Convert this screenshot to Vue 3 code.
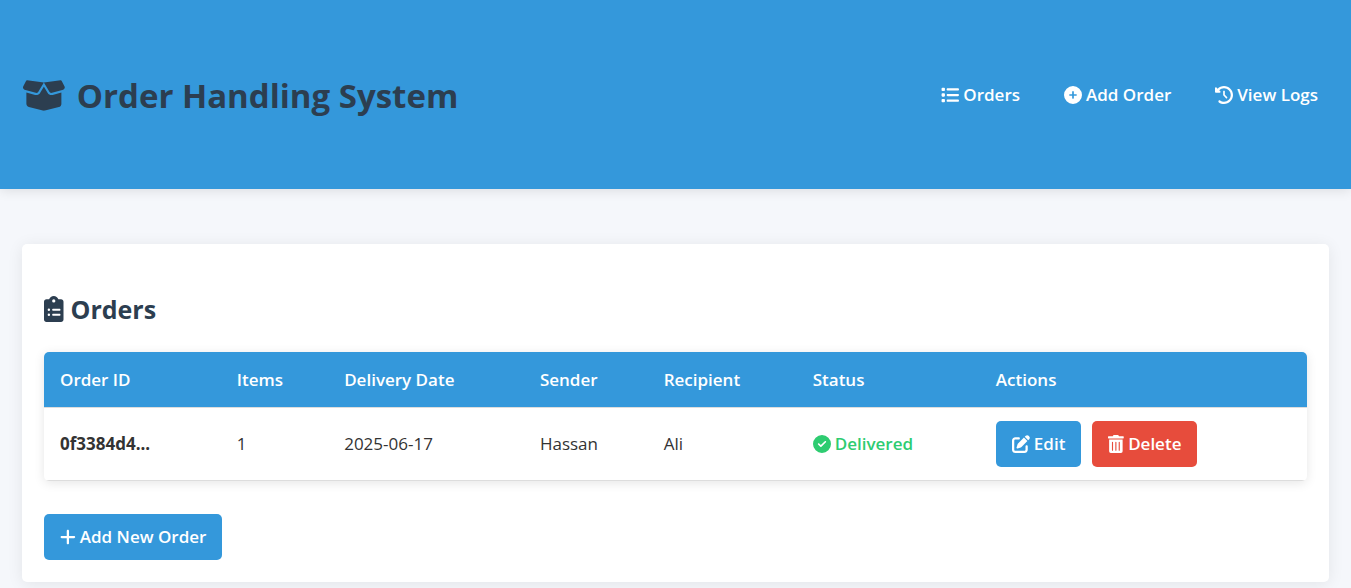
<script setup>
const icons = {
  box: { w: 640, d: 'M58.9 42.1c3-6.1 9.6-9.6 16.3-8.7L320 64 564.8 33.4c6.7-.8 13.3 2.7 16.3 8.7l41.7 83.4c9 17.9-.6 39.6-19.8 45.1L439.6 217.3c-13.9 4-28.8-1.9-36.2-14.3L320 64 236.6 203c-7.4 12.4-22.3 18.3-36.2 14.3L37.1 170.6c-19.3-5.5-28.8-27.2-19.8-45.1L58.9 42.1zM321.1 128l54.9 91.4c14.9 24.8 44.6 36.6 72.5 28.6L576 211.6v167c0 22-15 41.2-36.4 46.6l-204.1 51c-10.2 2.6-20.9 2.6-31 0l-204.1-51C79 419.7 64 400.5 64 378.5v-167L191.6 248c27.8 8 57.6-3.8 72.5-28.6L318.9 128h2.2z' },
  list: { w: 512, d: 'M40 48C26.7 48 16 58.7 16 72v48c0 13.3 10.7 24 24 24H88c13.3 0 24-10.7 24-24V72c0-13.3-10.7-24-24-24H40zM192 64c-17.7 0-32 14.3-32 32s14.3 32 32 32H480c17.7 0 32-14.3 32-32s-14.3-32-32-32H192zm0 160c-17.7 0-32 14.3-32 32s14.3 32 32 32H480c17.7 0 32-14.3 32-32s-14.3-32-32-32H192zm0 160c-17.7 0-32 14.3-32 32s14.3 32 32 32H480c17.7 0 32-14.3 32-32s-14.3-32-32-32H192zM16 232v48c0 13.3 10.7 24 24 24H88c13.3 0 24-10.7 24-24V232c0-13.3-10.7-24-24-24H40c-13.3 0-24 10.7-24 24zM40 368c-13.3 0-24 10.7-24 24v48c0 13.3 10.7 24 24 24H88c13.3 0 24-10.7 24-24V392c0-13.3-10.7-24-24-24H40z' },
  circlePlus: { w: 512, d: 'M256 512A256 256 0 1 0 256 0a256 256 0 1 0 0 512zM232 344V280H168c-13.3 0-24-10.7-24-24s10.7-24 24-24h64V168c0-13.3 10.7-24 24-24s24 10.7 24 24v64h64c13.3 0 24 10.7 24 24s-10.7 24-24 24H280v64c0 13.3-10.7 24-24 24s-24-10.7-24-24z' },
  history: { w: 512, d: 'M75 75L41 41C25.9 25.9 0 36.6 0 57.9V168c0 13.3 10.7 24 24 24H134.1c21.4 0 32.1-25.9 17-41l-30.8-30.8C155 85.5 203 64 256 64c106 0 192 86 192 192s-86 192-192 192c-40.8 0-78.6-12.7-109.7-34.4c-14.5-10.1-34.4-6.6-44.6 7.9s-6.6 34.4 7.9 44.6C151.2 495 201.7 512 256 512c141.4 0 256-114.6 256-256S397.4 0 256 0C185.3 0 121.3 28.7 75 75zm181 53c-13.3 0-24 10.7-24 24V256c0 6.4 2.5 12.5 7 17l72 72c9.4 9.4 24.6 9.4 33.9 0s9.4-24.6 0-33.9l-65-65V152c0-13.3-10.7-24-24-24z' },
  clipboard: { w: 384, d: 'M192 0c-41.8 0-77.4 26.7-90.5 64H48C21.5 64 0 85.5 0 112V464c0 26.5 21.5 48 48 48H336c26.5 0 48-21.5 48-48V112c0-26.5-21.5-48-48-48H282.5C269.4 26.7 233.8 0 192 0zm0 64a32 32 0 1 1 0 64 32 32 0 1 1 0-64zM72 272a24 24 0 1 1 48 0 24 24 0 1 1 -48 0zm104-20H312c8.8 0 12 8 12 20s-3.2 20-12 20H176c-8.8 0-16-8-16-20s7.200-20 16-20zM72 368a24 24 0 1 1 48 0 24 24 0 1 1 -48 0zm88 0c0-12 7.2-20 16-20H312c8.800 0 12 8 12 20s-3.200 20-12 20H176c-8.800 0-16-8-16-20z' },
  check: { w: 512, d: 'M256 512A256 256 0 1 0 256 0a256 256 0 1 0 0 512zM369 209L241 337c-9.4 9.4-24.6 9.4-33.9 0l-64-64c-9.4-9.4-9.4-24.6 0-33.9s24.6-9.4 33.9 0l47 47L335 175c9.4-9.4 24.6-9.4 33.9 0s9.4 24.6 0 33.9z' },
  edit: { w: 512, d: 'M471.6 21.7c-21.9-21.9-57.3-21.9-79.2 0L362.3 51.7l97.9 97.9 30.1-30.1c21.9-21.9 21.9-57.3 0-79.2L471.6 21.7zm-299.2 220c-6.1 6.1-10.8 13.6-13.5 21.9l-29.6 88.8c-2.9 8.6-.6 18.1 5.8 24.6s15.9 8.7 24.6 5.8l88.8-29.6c8.2-2.7 15.7-7.4 21.9-13.5L437.7 172.3 339.7 74.3 172.4 241.7zM96 64C43 64 0 107 0 160V416c0 53 43 96 96 96H352c53 0 96-43 96-96V320c0-17.7-14.3-32-32-32s-32 14.3-32 32v96c0 17.7-14.3 32-32 32H96c-17.7 0-32-14.3-32-32V160c0-17.7 14.3-32 32-32h96c17.7 0 32-14.3 32-32s-14.3-32-32-32H96z' },
  trash: { w: 448, d: 'M32 464a48 48 0 0 0 48 48h288a48 48 0 0 0 48-48V128H32zm272-256a16 16 0 0 1 32 0v224a16 16 0 0 1-32 0zm-96 0a16 16 0 0 1 32 0v224a16 16 0 0 1-32 0zm-96 0a16 16 0 0 1 32 0v224a16 16 0 0 1-32 0zM432 32H312l-9.4-18.7A24 24 0 0 0 281.1 0H166.8a23.7 23.7 0 0 0-21.4 13.3L136 32H16A16 16 0 0 0 0 48v32a16 16 0 0 0 16 16h416a16 16 0 0 0 16-16V48a16 16 0 0 0-16-16z' },
  plus: { w: 448, d: 'M256 80c0-17.7-14.3-32-32-32s-32 14.3-32 32V224H48c-17.7 0-32 14.3-32 32s14.3 32 32 32H192V432c0 17.7 14.3 32 32 32s32-14.3 32-32V288H400c17.7 0 32-14.3 32-32s-14.3-32-32-32H256V80z' },
}

const Icon = (props) =>
  h('svg', { class: 'icon', viewBox: `0 0 ${icons[props.name].w} 512`, 'aria-hidden': 'true' }, [
    h('path', { d: icons[props.name].d }),
  ])
Icon.props = ['name']

const links = [
  { icon: 'list', label: 'Orders' },
  { icon: 'circlePlus', label: 'Add Order' },
  { icon: 'history', label: 'View Logs' },
]
const columns = ['Order ID', 'Items', 'Delivery Date', 'Sender', 'Recipient', 'Status', 'Actions']
const orders = [
  { id: '0f3384d4...', items: 1, date: '2025-06-17', sender: 'Hassan', recipient: 'Ali', status: 'Delivered' },
]
</script>

<script>
import { h } from 'vue'
</script>

<template>
  <header class="header">
    <h1 class="brand"><Icon name="box" />Order Handling System</h1>
    <nav class="nav">
      <a v-for="link in links" :key="link.label" href="#" class="nav-link"><Icon :name="link.icon" />{{ link.label }}</a>
    </nav>
  </header>
  <main class="card">
    <h2 class="title"><Icon name="clipboard" />Orders</h2>
    <table class="orders">
      <colgroup>
        <col class="c-id" /><col class="c-items" /><col class="c-date" /><col class="c-sender" />
        <col class="c-recipient" /><col class="c-status" /><col />
      </colgroup>
      <thead>
        <tr><th v-for="column in columns" :key="column" scope="col">{{ column }}</th></tr>
      </thead>
      <tbody>
        <tr v-for="order in orders" :key="order.id">
          <td><strong>{{ order.id }}</strong></td>
          <td>{{ order.items }}</td>
          <td>{{ order.date }}</td>
          <td>{{ order.sender }}</td>
          <td>{{ order.recipient }}</td>
          <td><span class="status"><Icon name="check" />{{ order.status }}</span></td>
          <td>
            <div class="actions">
              <button type="button" class="btn"><Icon name="edit" />Edit</button>
              <button type="button" class="btn danger"><Icon name="trash" />Delete</button>
            </div>
          </td>
        </tr>
      </tbody>
    </table>
    <button type="button" class="btn"><Icon name="plus" />Add New Order</button>
  </main>
</template>

<style>
body {
  background: #f5f7fb;
  color: #333;
  font: 17px/28px "Segoe UI", "Open Sans", "Noto Sans", sans-serif;
}
</style>

<style scoped>
.header {
  display: flex;
  align-items: center;
  justify-content: space-between;
  box-sizing: border-box;
  min-height: 189px;
  padding: 22px;
  background: #3498db;
  box-shadow: 0 2px 11px rgba(0, 0, 0, 0.1);
}
.icon {
  flex: none;
  height: 18px;
  fill: currentColor;
}
.brand {
  display: flex;
  align-items: center;
  gap: 11px;
  margin: 0;
  padding-top: 2px;
  color: #2c3e50;
  font-size: 33px;
  line-height: 56px;
  font-weight: 700;
}
.brand .icon {
  height: 35px;
}
.nav {
  display: flex;
  gap: 22px;
}
.nav-link {
  display: flex;
  align-items: center;
  gap: 4px;
  padding: 9px 11px;
  color: #fff;
  font-weight: 600;
  text-decoration: none;
}
.card {
  margin: 55px 22px 22px;
  padding: 43px 22px 22px;
  border-radius: 5px;
  background: #fff;
  box-shadow: 0 2px 16px rgba(0, 0, 0, 0.08);
}
.title {
  display: flex;
  align-items: center;
  gap: 7px;
  margin: 0 0 21px;
  color: #2c3e50;
  font-size: 25px;
  line-height: 44px;
  font-weight: 700;
}
.title .icon {
  height: 26px;
}
.orders {
  width: 100%;
  table-layout: fixed;
  margin-bottom: 33px;
  border-collapse: collapse;
  border-radius: 5px;
  overflow: hidden;
  box-shadow: 0 2px 11px rgba(0, 0, 0, 0.1);
}
.c-id { width: 14%; }
.c-items { width: 8.5%; }
.c-date { width: 15.5%; }
.c-sender { width: 9.8%; }
.c-recipient { width: 11.8%; }
.c-status { width: 14.5%; }
th,
td {
  padding: 13px 16px;
  border-bottom: 1px solid #ddd;
  text-align: left;
}
th {
  padding-top: 14px;
  background: #3498db;
  color: #fff;
  font-weight: 600;
}
strong {
  font-weight: 700;
}
.status {
  display: flex;
  align-items: center;
  gap: 4px;
  color: #2ecc71;
  font-weight: 600;
}
.actions {
  display: flex;
  gap: 11px;
}
.btn {
  display: inline-flex;
  align-items: center;
  gap: 4px;
  padding: 9px 16px;
  border: 0;
  border-radius: 5px;
  background: #3498db;
  color: #fff;
  font: inherit;
  font-weight: 600;
  cursor: pointer;
}
.danger {
  background: #e74c3c;
}
</style>
